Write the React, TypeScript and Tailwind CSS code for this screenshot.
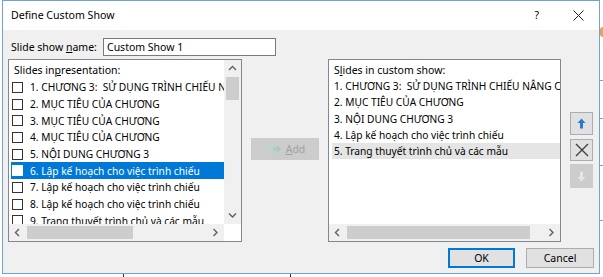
import React from "react";

const leftItems = [
  "1. CHƯƠNG 3:  SỬ DỤNG TRÌNH CHIẾU NÂNG CAO",
  "2. MỤC TIÊU CỦA CHƯƠNG",
  "3. MỤC TIÊU CỦA CHƯƠNG",
  "4. MỤC TIÊU CỦA CHƯƠNG",
  "5. NỘI DUNG CHƯƠNG 3",
  "6. Lập kế hoạch cho việc trình chiếu",
  "7. Lập kế hoạch cho việc trình chiếu",
  "8. Lập kế hoạch cho việc trình chiếu",
  "9. Trang thuyết trình chủ và các mẫu",
];

const rightItems = [
  "1. CHƯƠNG 3:  SỬ DỤNG TRÌNH CHIẾU NÂNG CAO",
  "2. MỤC TIÊU CỦA CHƯƠNG",
  "3. NỘI DUNG CHƯƠNG 3",
  "4. Lập kế hoạch cho việc trình chiếu",
  "5. Trang thuyết trình chủ và các mẫu",
];

function Chevron({ dir }: { dir: "up" | "down" | "left" | "right" }) {
  if (dir === "up" || dir === "down") {
    const d = dir === "up" ? "M1 5 L4.5 1.5 L8 5" : "M1 1.5 L4.5 5 L8 1.5";
    return (
      <svg width="9" height="7" viewBox="0 0 9 7">
        <path d={d} stroke="#606060" strokeWidth="1.4" fill="none" />
      </svg>
    );
  }
  const d = dir === "left" ? "M5 1 L1.5 4.5 L5 8" : "M1.5 1 L5 4.5 L1.5 8";
  return (
    <svg width="7" height="9" viewBox="0 0 7 9">
      <path d={d} stroke="#606060" strokeWidth="1.4" fill="none" />
    </svg>
  );
}

function HScroll({ thumbLeft, thumbWidth }: { thumbLeft: number; thumbWidth: number }) {
  return (
    <div className="flex h-[17px] flex-1 items-center bg-[#f0f0f0]">
      <div className="flex h-full w-[17px] items-center justify-center">
        <Chevron dir="left" />
      </div>
      <div className="relative h-full flex-1">
        <div
          className="absolute top-[2px] h-[13px] bg-[#cdcdcd]"
          style={{ left: thumbLeft, width: thumbWidth }}
        />
      </div>
      <div className="flex h-full w-[17px] items-center justify-center">
        <Chevron dir="right" />
      </div>
    </div>
  );
}

function Checkbox({ light }: { light?: boolean }) {
  return (
    <div
      className={
        "h-[11px] w-[11px] shrink-0 border bg-white " +
        (light ? "border-white" : "border-[#333333]")
      }
    />
  );
}

export default function App() {
  return (
    <div className="flex h-[277px] w-[603px] flex-col overflow-hidden bg-white font-['Noto_Sans',sans-serif] text-[10.5px] leading-none text-black">
      <div className="flex">
        <div className="w-[2px]" />
        {/* dialog */}
        <div className="flex h-[274px] w-[598px] flex-col border border-[#6ea3d8]">
          {/* title bar */}
          <div className="flex h-[29px] items-center bg-white pl-[8px] pr-[15px]">
            <span className="text-[10.6px]">Define Custom Show</span>
            <span className="ml-auto mr-[34px] text-[10.5px]">?</span>
            <svg width="11" height="11" viewBox="0 0 11 11">
              <path d="M0.5 0.5 L10.5 10.5 M10.5 0.5 L0.5 10.5" stroke="#222" strokeWidth="1" />
            </svg>
          </div>
          {/* body */}
          <div className="flex flex-1 flex-col bg-[#f0f0f0] pl-[5px] pr-[4px] pt-[8px]">
            <div className="flex h-[18px] items-center">
              <span className="ml-[3px] w-[92px] whitespace-nowrap">
                Slide show <span className="underline">n</span>ame:
              </span>
              <div className="flex h-[18px] w-[173px] items-center border border-[#7a7a7a] bg-white pl-[3px]">
                Custom Show 1
              </div>
            </div>

            <div className="mt-[3px] flex h-[183px] text-[10.2px]">
              {/* left list */}
              <div className="flex w-[234px] flex-col border border-[#828790] bg-white">
                <div className="flex h-[164px]">
                  <div className="flex flex-1 flex-col overflow-hidden">
                    <div className="flex h-[19px] shrink-0 items-center whitespace-nowrap pl-[5px] pt-[2px] text-[10.5px]">
                      Slides in <span className="underline">p</span>resentation:
                    </div>
                    {leftItems.map((t, i) => {
                      const sel = i === 5;
                      return (
                        <div
                          key={i}
                          className={
                            "ml-[2px] flex h-[16.7px] shrink-0 items-center gap-[7px] whitespace-pre pl-[1px] " +
                            (sel ? "bg-[#0078d7] text-white" : "")
                          }
                        >
                          <Checkbox light={sel} />
                          <span>{t}</span>
                        </div>
                      );
                    })}
                  </div>
                  {/* vertical scrollbar */}
                  <div className="flex w-[17px] flex-col bg-[#f0f0f0]">
                    <div className="flex h-[17px] items-center justify-center">
                      <Chevron dir="up" />
                    </div>
                    <div className="mx-[2px] h-[23px] bg-[#cdcdcd]" />
                    <div className="flex-1" />
                    <div className="flex h-[17px] items-center justify-center">
                      <Chevron dir="down" />
                    </div>
                  </div>
                </div>
                <div className="flex h-[17px]">
                  <HScroll thumbLeft={1} thumbWidth={106} />
                  <div className="w-[17px] bg-white" />
                </div>
              </div>

              {/* add button */}
              <div className="flex w-[86px] items-center justify-center">
                <div className="mt-[-3px] flex h-[22px] w-[68px] items-center justify-center gap-[3px] bg-[#cccccc] text-[10.5px] text-[#a0a0a0]">
                  <svg width="18" height="10" viewBox="0 0 18 10">
                    <path d="M1 3.5 H6 V1 L10 5 L6 9 V6.5 H1 Z" fill="#b9d6c8" />
                    <path d="M8 3.5 H12 V1 L16.5 5 L12 9 V6.5 H8 Z" fill="#a9cdbb" />
                  </svg>
                  <span>
                    <span className="underline">A</span>dd
                  </span>
                </div>
              </div>

              {/* right list */}
              <div className="flex w-[233px] flex-col border border-[#828790] bg-white">
                <div className="flex h-[164px] flex-col overflow-hidden">
                  <div className="flex h-[18px] shrink-0 items-center whitespace-nowrap pl-[5px] pt-[2px] text-[10.5px]">
                    S<span className="underline">l</span>ides in custom show:
                  </div>
                  {rightItems.map((t, i) => (
                    <div
                      key={i}
                      className={
                        "ml-[3px] flex h-[16.3px] shrink-0 items-center whitespace-pre pl-[2px] " +
                        (i === 4 ? "bg-[#e5e5e5]" : "")
                      }
                    >
                      {t}
                    </div>
                  ))}
                </div>
                <div className="flex h-[17px]">
                  <HScroll thumbLeft={1} thumbWidth={183} />
                </div>
              </div>

              {/* move buttons */}
              <div className="ml-[9px] flex w-[23px] flex-col pt-[53px]">
                <div className="flex h-[23px] items-center justify-center border border-[#adadad] bg-[#e1e1e1]">
                  <svg width="9" height="11" viewBox="0 0 9 11">
                    <path d="M4.5 0.5 L8.5 5 H6 V10.5 H3 V5 H0.5 Z" fill="#2b7bd0" />
                  </svg>
                </div>
                <div className="mt-[4px] flex h-[22px] items-center justify-center border border-[#adadad] bg-[#e1e1e1]">
                  <svg width="14" height="14" viewBox="0 0 14 14">
                    <path d="M1 1 L13 13 M13 1 L1 13" stroke="#3c3c3c" strokeWidth="1.3" />
                  </svg>
                </div>
                <div className="mt-[3px] flex h-[24px] items-center justify-center bg-[#cccccc]">
                  <svg width="9" height="11" viewBox="0 0 9 11">
                    <path d="M4.5 10.5 L8.5 6 H6 V0.5 H3 V6 H0.5 Z" fill="#e6e6e6" />
                  </svg>
                </div>
              </div>
            </div>

            {/* bottom buttons */}
            <div className="mt-[6px] flex h-[20px] justify-end gap-[11px] pr-[1px]">
              <div className="flex w-[67px] items-center justify-center border-2 border-[#0078d7] bg-[#e1e1e1]">
                OK
              </div>
              <div className="flex w-[68px] items-center justify-center border border-[#adadad] bg-[#e1e1e1]">
                Cancel
              </div>
            </div>
          </div>
        </div>
        {/* background behind dialog, right edge */}
        <div className="flex flex-1 flex-col">
          <div className="mt-[27px] h-[10px] w-[3px] rounded-l-full bg-[#e8a060]" />
          <div className="mt-[43px] h-px bg-[#9a9a9a]" />
          <div className="mt-[37px] h-px bg-[#9a9a9a]" />
          <div className="mt-[46px] h-px bg-[#9a9a9a]" />
          <div className="mt-[54px] h-px bg-[#9a9a9a]" />
        </div>
      </div>
      {/* background below dialog */}
      <div className="flex flex-1">
        <div className="ml-[123px] w-px bg-[#333]" />
        <div className="ml-[166px] w-px bg-[#333]" />
      </div>
    </div>
  );
}
